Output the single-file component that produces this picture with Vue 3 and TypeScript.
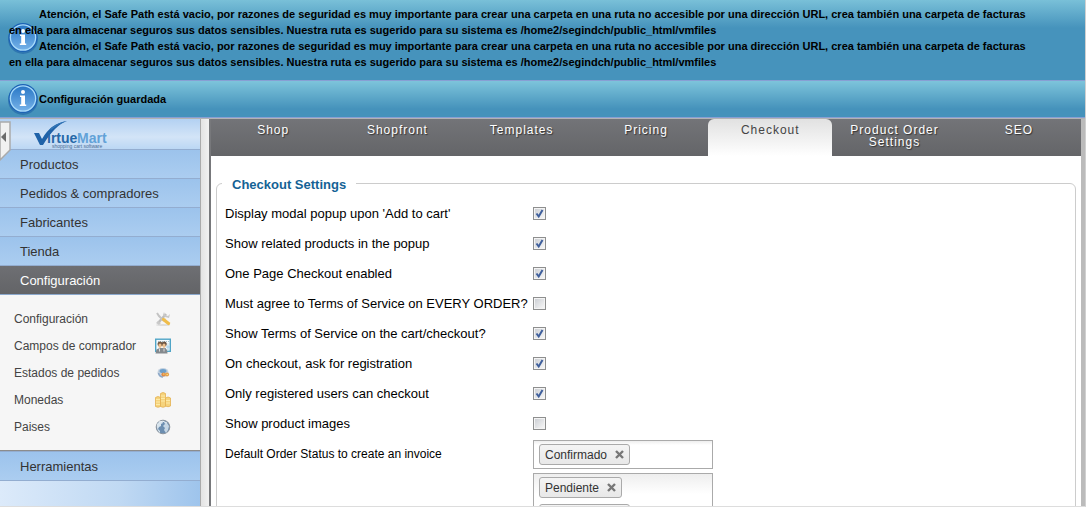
<script setup lang="ts">
import { ref } from 'vue'

interface Toggle { id: string; label: string; checked: boolean }
interface SubItem { label: string; icon: 'tools' | 'card' | 'status' | 'coins' | 'globe' }

const warning: string[] = [
  'Atención, el Safe Path está vacio, por razones de seguridad es muy importante para crear una carpeta en una ruta no accesible por una dirección URL, crea también una carpeta de facturas',
  'en ella para almacenar seguros sus datos sensibles. Nuestra ruta es sugerido para su sistema es /home2/segindch/public_html/vmfiles',
]

const menu: string[] = ['Productos', 'Pedidos & compradores', 'Fabricantes', 'Tienda', 'Configuración']
const subItems: SubItem[] = [
  { label: 'Configuración', icon: 'tools' },
  { label: 'Campos de comprador', icon: 'card' },
  { label: 'Estados de pedidos', icon: 'status' },
  { label: 'Monedas', icon: 'coins' },
  { label: 'Paises', icon: 'globe' },
]

const tabs: string[] = ['Shop', 'Shopfront', 'Templates', 'Pricing', 'Checkout', 'Product Order Settings', 'SEO']
const activeTab = ref('Checkout')

const toggles = ref<Toggle[]>([
  { id: 'popup', label: "Display modal popup upon 'Add to cart'", checked: true },
  { id: 'related', label: 'Show related products in the popup', checked: true },
  { id: 'opc', label: 'One Page Checkout enabled', checked: true },
  { id: 'tos-order', label: 'Must agree to Terms of Service on EVERY ORDER?', checked: false },
  { id: 'tos-cart', label: 'Show Terms of Service on the cart/checkout?', checked: true },
  { id: 'register', label: 'On checkout, ask for registration', checked: true },
  { id: 'registered', label: 'Only registered users can checkout', checked: true },
  { id: 'images', label: 'Show product images', checked: false },
])

const invoiceStatus = ref<string[]>(['Confirmado'])
const otherStatus = ref<string[]>(['Pendiente', 'Confirmado'])

function remove(list: string[], index: number): void {
  list.splice(index, 1)
}
</script>

<template>
  <div class="app">
    <section class="notice notice-tall">
      <svg class="info" viewBox="0 0 32 32" aria-hidden="true">
        <ellipse cx="16" cy="17" rx="15" ry="15" fill="#1d5fa6" opacity=".55" />
        <circle cx="16" cy="15.500" r="14.500" fill="#1b62b5" />
        <circle cx="16" cy="15.500" r="13.300" fill="#a9dcfb" />
        <circle cx="16" cy="15.500" r="12" fill="url(#info-a)" />
        <circle cx="16" cy="9" r="2" fill="#fff" />
        <path d="M13 12.500h5v9h1.200v1.500h-6.400v-1.500h1.400v-7.500h-1.200z" fill="#fff" />
        <defs>
          <linearGradient id="info-a" x1="0" y1="0" x2="0" y2="1">
            <stop offset="0" stop-color="#2a78c6" /><stop offset="1" stop-color="#74b1e8" />
          </linearGradient>
        </defs>
      </svg>
      <div class="notice-text">
        <template v-for="n in 2" :key="n">
          <p v-for="(line, i) in warning" :key="i" :class="{ indent: i === 0 }">{{ line }}</p>
        </template>
      </div>
    </section>
    <section class="notice notice-short">
      <svg class="info" viewBox="0 0 32 32" aria-hidden="true">
        <ellipse cx="16" cy="17" rx="15" ry="15" fill="#1d5fa6" opacity=".55" />
        <circle cx="16" cy="15.500" r="14.500" fill="#1b62b5" />
        <circle cx="16" cy="15.500" r="13.300" fill="#a9dcfb" />
        <circle cx="16" cy="15.500" r="12" fill="url(#info-a)" />
        <circle cx="16" cy="9" r="2" fill="#fff" />
        <path d="M13 12.500h5v9h1.200v1.500h-6.400v-1.500h1.400v-7.500h-1.200z" fill="#fff" />
      </svg>
      <div class="notice-text"><p class="indent">Configuración guardada</p></div>
    </section>

    <div class="body">
      <nav class="sidebar">
        <button class="collapse" type="button" aria-label="Collapse menu">
          <svg viewBox="0 0 11 40" aria-hidden="true">
            <path d="M0 1h10v28l-10 10z" fill="#f1f1f1" stroke="#aaa" stroke-width="1.500" />
            <path d="M6 11v10l-5-5z" fill="#6b6b6b" />
          </svg>
        </button>
        <div class="brand">
          <svg class="logo" viewBox="0 0 76 30" role="img" aria-label="VirtueMart">
            <path d="M0 14h5l3 6Q17 4 33 2Q21 6 9 26H6Z" fill="#1f62a8" />
            <path d="M16 10Q23 4 33 2Q24 5 17 11Z" fill="#3478b8" />
            <text x="13" y="24" class="logo-a">irtue</text>
            <text x="43" y="24" class="logo-b">Mart</text>
            <text x="18" y="29" class="logo-c">shopping cart software</text>
          </svg>
        </div>
        <a v-for="item in menu" :key="item" href="#" class="menu-item" :class="{ active: item === 'Configuración' }">{{ item }}</a>
        <div class="submenu">
          <a v-for="item in subItems" :key="item.label" href="#" class="sub-item">
            <span>{{ item.label }}</span>
            <svg class="sub-icon" viewBox="0 0 16 16" aria-hidden="true">
              <g v-if="item.icon === 'tools'">
                <ellipse cx="8" cy="14" rx="7" ry="1" fill="#ddd" />
                <path d="M3 12L11 3" stroke="#bdbdbd" stroke-width="2.500" />
                <path d="M9 1l1 3 3 1 2-2-1 4-4-1-2-2z" fill="#c8c8c8" />
                <path d="M2 2l2 3 5 5" fill="none" stroke="#c4c4c4" stroke-width="2" />
                <path d="M1 12l2-2 3 2-2 2z" fill="#c9c9c9" />
                <path d="M8.500 8.500l5 4" stroke="#efbd4c" stroke-width="3.200" stroke-linecap="round" />
              </g>
              <g v-else-if="item.icon === 'card'">
                <rect x=".7" y="1.200" width="14.600" height="12.100" fill="#f6fbfd" stroke="#50a5c7" stroke-width="1.400" />
                <path d="M3 3.500h11M11.500 6h3" stroke="#a5bfcb" stroke-dasharray="1 1" />
                <path d="M11 9h4M13 7v5" stroke="#9dcbe8" stroke-width="1" />
                <circle cx="5" cy="6" r="2.500" fill="#765b45" /><circle cx="9.200" cy="6" r="2.500" fill="#6b5543" />
                <ellipse cx="5" cy="7.800" rx="1.600" ry="2.200" fill="#edc08f" />
                <ellipse cx="9" cy="7.800" rx="1.600" ry="2.200" fill="#edc08f" />
                <path d="M.5 15.500l1-4 3-1.500h6l1.500 2 .5 3.500z" fill="#84898d" />
                <path d="M4.500 10.500v3M9 10.500v3" stroke="#ddd" />
              </g>
              <g v-else-if="item.icon === 'status'">
                <ellipse cx="8" cy="7.500" rx="5.500" ry="4.500" fill="#c4d1df" />
                <ellipse cx="8" cy="6" rx="3.500" ry="2" fill="#6d9fca" />
                <path d="M3.500 8q1 4 4.500 4" fill="none" stroke="#8ca7c7" stroke-width="1.500" />
                <circle cx="8.500" cy="9.500" r="2.100" fill="#df8b48" /><circle cx="12" cy="9.500" r="2.100" fill="#e4a04e" />
                <path d="M8 9h1.500M11.500 9.500h1.500" stroke="#f9dc73" />
              </g>
              <g v-else-if="item.icon === 'coins'" fill="#f5d37c" stroke="#e4b152" stroke-width=".8">
                <path d="M5.500 1.500q2.500-2 5 0v13q-2.500 1.500-5 0z" />
                <path d="M.5 5.500q2.500-2 5 0v9q-2.500 1.500-5 0z" />
                <path d="M10.500 6q2.500-2 5 0v8q-2.500 1.500-5 0z" />
                <path d="M1 7.500h4M1 10h4M1 12.500h4M6 4h4M6 6.500h4M6 9h4M11 8.500h4M11 11h4" stroke="#fff0b3" />
              </g>
              <g v-else>
                <circle cx="8" cy="8" r="6.800" fill="#6c8eb0" stroke="#8b949d" />
                <path d="M2 5q2-3 5-3l1 2-2 1v2l-2 1-1 2 2 2v2Q1 10 2 5z" fill="#d8e4ed" />
                <path d="M9 3l3 1 2 3-1 4-2 3-2-3 1-2-2-2 2-2z" fill="#c6d7e5" />
                <path d="M4 3q4-2 8 1" fill="none" stroke="#e9f0f5" />
              </g>
            </svg>
          </a>
        </div>
        <a href="#" class="menu-item">Herramientas</a>
        <div class="sidebar-foot"></div>
      </nav>
      <div class="divider"></div>

      <main class="panel">
        <div class="tabs" role="tablist">
          <button
            v-for="tab in tabs"
            :key="tab"
            type="button"
            role="tab"
            class="tab"
            :class="{ selected: tab === activeTab }"
            :aria-selected="tab === activeTab"
            @click="activeTab = tab"
          >{{ tab }}</button>
        </div>
        <form class="content" @submit.prevent>
          <fieldset class="settings">
            <legend>Checkout Settings</legend>
            <div v-for="t in toggles" :key="t.id" class="row">
              <label :for="t.id">{{ t.label }}</label>
              <input :id="t.id" v-model="t.checked" type="checkbox" />
            </div>
            <div class="row row-select">
              <span id="invoice-label" class="small-label">Default Order Status to create an invoice</span>
              <ul class="chips" aria-labelledby="invoice-label">
                <li v-for="(s, i) in invoiceStatus" :key="s" class="chip">
                  <span>{{ s }}</span>
                  <button type="button" :aria-label="'Remove ' + s" @click="remove(invoiceStatus, i)">
                    <svg viewBox="0 0 9 9" aria-hidden="true"><path d="M1 1l7 7M8 1l-7 7" stroke="#777" stroke-width="2.400" /></svg>
                  </button>
                </li>
              </ul>
            </div>
            <div class="row row-select">
              <span></span>
              <ul class="chips tall">
                <li v-for="(s, i) in otherStatus" :key="s" class="chip">
                  <span>{{ s }}</span>
                  <button type="button" :aria-label="'Remove ' + s" @click="remove(otherStatus, i)">
                    <svg viewBox="0 0 9 9" aria-hidden="true"><path d="M1 1l7 7M8 1l-7 7" stroke="#777" stroke-width="2.400" /></svg>
                  </button>
                </li>
              </ul>
            </div>
          </fieldset>
        </form>
      </main>
    </div>
  </div>
</template>

<style>
body {
  margin: 0;
  background: #fff;
}
</style>

<style scoped>
* {
  box-sizing: border-box;
}
.app {
  display: flex;
  flex-direction: column;
  height: 100vh;
  margin-right: 5px;
  border-right: 1px solid #d0d0d0;
  border-bottom: 1px solid #ddd;
  overflow: hidden;
  font-family: "Liberation Sans", Arial, sans-serif;
  font-size: 13px;
  color: #000;
}
.notice {
  position: relative;
  flex: none;
  padding: 6px 9px;
  border-bottom: 1px solid #879fd4;
  font-size: 11px;
  font-weight: bold;
  line-height: 16px;
}
.notice-tall {
  padding-bottom: 10px;
  background: linear-gradient(#79c0d8, #4693bc 28px);
}
.notice-short {
  padding: 10px 9px;
  background: linear-gradient(#7dc4db, #4592bb 28px);
}
.notice p {
  margin: 0;
  white-space: nowrap;
}
.notice .indent {
  padding-left: 30px;
}
.info {
  position: absolute;
  left: 7px;
  top: 50%;
  width: 32px;
  height: 32px;
  margin-top: -16px;
}
.notice-tall .info {
  margin-top: -18px;
}
.notice-text {
  position: relative;
}
.body {
  display: flex;
  flex: 1;
  min-height: 0;
  border-top: 1px solid #b3b3b3;
}
.sidebar {
  position: relative;
  display: flex;
  flex-direction: column;
  flex: none;
  width: 200px;
}
.brand {
  flex: none;
  height: 30px;
  padding-left: 34px;
  background: linear-gradient(#b3d1f2, #d3e4f7 60%, #bbd7f4);
}
.logo {
  display: block;
  width: 76px;
  height: 30px;
}
.logo-a,
.logo-b {
  font-size: 14px;
  font-weight: bold;
  fill: #2868a8;
}
.logo-b {
  fill: #62a2d8;
}
.logo-c {
  font-size: 5px;
  fill: #4d6e94;
}
.collapse {
  position: absolute;
  left: 0;
  top: 2px;
  width: 11px;
  height: 40px;
  padding: 0;
  border: 0;
  background: none;
  cursor: pointer;
}
.collapse svg {
  display: block;
}
.menu-item {
  flex: none;
  height: 29px;
  padding-left: 20px;
  border-top: 1px solid #93add0;
  background: linear-gradient(#9cc3ec, #abcdf0);
  color: #333;
  line-height: 29px;
  text-decoration: none;
}
.menu-item.active {
  background: linear-gradient(#6e6f73, #636467);
  color: #fff;
}
.submenu {
  flex: none;
  padding: 10px 29px 10px 14px;
  border-top: 1px solid #8ba8cc;
  border-bottom: 1px solid #8c8c8c;
  background: #f6f6f6;
}
.sub-item {
  display: flex;
  align-items: center;
  justify-content: space-between;
  height: 27px;
  color: #444;
  font-size: 12px;
  text-decoration: none;
}
.sub-icon {
  width: 16px;
  height: 16px;
}
.sidebar-foot {
  flex: 1;
  border-top: 1px solid #93add0;
  background: linear-gradient(90deg, #dceafa, #c0d9f3 60%, #9ec4ec);
}
.divider {
  flex: none;
  width: 11px;
  border-left: 1px solid #aaa;
  border-right: 2px solid #77787b;
  background: linear-gradient(90deg, #e3e3e3, #f1f1f1);
}
.panel {
  flex: 1;
  min-width: 0;
  border-right: 4px solid #bbb;
}
.tabs {
  display: flex;
  height: 37px;
  background: linear-gradient(#737478, #646568);
}
.tab {
  display: flex;
  flex: 1 1 0;
  justify-content: center;
  align-items: flex-start;
  min-width: 0;
  padding: 5px 12px 0;
  border: 0;
  background: none;
  color: #fff;
  font-family: inherit;
  font-size: 12px;
  line-height: 12px;
  letter-spacing: 1px;
  text-align: center;
  text-shadow: 1px 1px 1px #333;
}
.tab.selected {
  border-radius: 6px 6px 0 0;
  background: linear-gradient(#e1e1e1, #fff);
  color: #444;
  text-shadow: none;
}
.content {
  padding: 18px 5px 0;
}
.settings {
  margin: 0;
  padding: 5px 8px 20px;
  border: 1px solid #ccc;
  border-radius: 6px;
}
.settings legend {
  margin-left: -3px;
  padding: 3px 10px 0;
  color: #146295;
  font-weight: bold;
  line-height: 16px;
}
.row {
  display: grid;
  grid-template-columns: 308px 1fr;
  align-items: center;
  height: 30px;
}
.row label {
  white-space: nowrap;
}
.row input {
  appearance: none;
  width: 13px;
  height: 13px;
  margin: 0;
  border: 1px solid #8e8f8f;
  background: linear-gradient(135deg, #cdd0d5, #f6f6f6) center / 9px 9px no-repeat #f4f4f4;
}
.row input:checked {
  background:
    url("data:image/svg+xml,%3Csvg xmlns='http://www.w3.org/2000/svg' viewBox='0 0 11 11'%3E%3Cpath d='M2.500 5.500l2.200 3L8.500 2' fill='none' stroke='%233f5f9c' stroke-width='2'/%3E%3C/svg%3E") center / 11px 11px no-repeat,
    linear-gradient(135deg, #cdd0d5, #f6f6f6) center / 9px 9px no-repeat #f4f4f4;
}
.row-select {
  align-items: start;
  height: auto;
  padding-top: 2px;
  margin-bottom: 2px;
}
.small-label {
  font-size: 12px;
  line-height: 28px;
}
.chips {
  width: 180px;
  margin: 0;
  padding: 3px 5px;
  border: 1px solid #aaa;
  background: linear-gradient(#eee, #fff 4px);
  list-style: none;
}
.chips.tall {
  background: linear-gradient(#eee, #fff 20px);
}
.chip {
  display: flex;
  align-items: center;
  gap: 8px;
  width: max-content;
  height: 21px;
  margin-bottom: 6px;
  padding: 0 5px;
  border: 1px solid #aaa;
  border-radius: 3px;
  background: linear-gradient(#f4f4f4, #e8e8e8);
  color: #333;
  font-size: 12px;
}
.chip:only-child {
  margin-bottom: 0;
}
.chip button {
  display: block;
  width: 9px;
  height: 9px;
  padding: 0;
  border: 0;
  background: none;
}
.chip svg {
  display: block;
}
</style>
